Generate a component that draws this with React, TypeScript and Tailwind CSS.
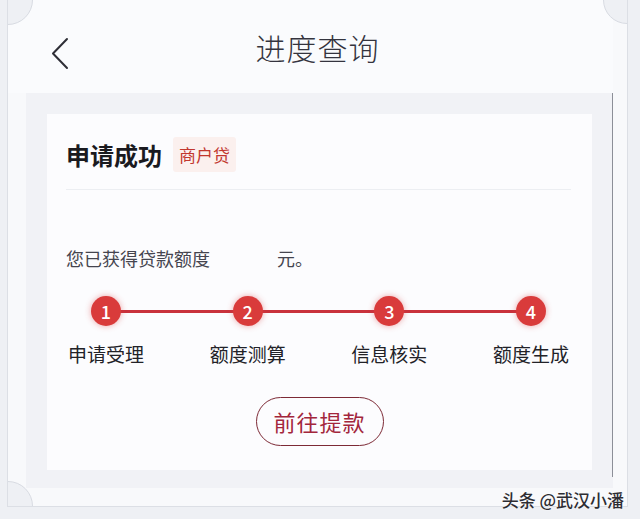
import React from "react";

const steps = ["申请受理", "额度测算", "信息核实", "额度生成"];

const font = { fontFamily: '"Noto Sans CJK SC", "Noto Sans", sans-serif' };

const Step = ({n, label}: {n: number; label: string}) => (
    <div className="relative z-10 flex w-[80px] flex-col items-center">
        <div className="flex size-[30px] items-center justify-center rounded-full bg-[#d93b3b] text-[18px] font-medium leading-none text-white shadow-[0_0_6px_rgba(217,59,59,0.45)]">
            {n}
        </div>
        <span className="mt-[16px] whitespace-nowrap text-[19px] leading-[24px] text-[#222228]">{label}</span>
    </div>
);

export default function App() {
    return (
        <div className="relative h-[519px] w-[640px] overflow-hidden bg-[#eef0f4]" style={font}>
            {/* phone frame */}
            <div className="relative ml-[7px] h-[507px] w-[621px] overflow-hidden border-x border-b border-[#dcdfe5] bg-[#f8f9fb]">
                {/* notched corners */}
                <div className="absolute -left-[25px] -top-[25px] z-20 size-[50px] rounded-full border border-[#d8dbe2] bg-[#eef0f4]" />
                <div className="absolute -right-[24px] -top-[24px] z-20 size-[48px] rounded-full border border-[#d8dbe2] bg-[#eef0f4]" />
                <div className="absolute -bottom-[25px] -left-[25px] z-20 size-[50px] rounded-full border border-[#d8dbe2] bg-[#eef0f4]" />
                {/* right edge of the screen */}
                <div className="absolute left-[604px] top-[20px] h-[457px] w-px bg-[#8c8f98]" />

                <div className="flex h-full w-[605px] flex-col">
                    {/* header */}
                    <div className="relative flex h-[93px] shrink-0 items-center justify-center bg-[#fafbfd]">
                        <svg className="absolute left-[43px] top-[37px]" width="20" height="34" viewBox="0 0 20 34" fill="none">
                            <path d="M16 2 L2 16.5 L16 31" stroke="#2e2e36" strokeWidth="2" strokeLinecap="round" strokeLinejoin="round" />
                        </svg>
                        <h1 className="ml-[14px] text-[30px] font-light leading-none tracking-[1px] text-[#34343e]">进度查询</h1>
                    </div>

                    {/* content */}
                    <div className="ml-[18px] h-[395px] bg-[#f1f2f6] px-[21px] pt-[21px]">
                        <div className="flex h-[356px] flex-col bg-[#fcfcfe] px-[19px] pt-[23px]">
                            <div className="flex items-center gap-[11px]">
                                <span className="text-[24px] font-bold leading-[35px] text-[#1a1a1f]">申请成功</span>
                                <span className="rounded-[3px] bg-[#fbf0ee] px-[6px] text-[17px] leading-[35px] text-[#c2372e]">商户贷</span>
                            </div>
                            <div className="mr-[2px] mt-[17px] h-px bg-[#eceef2]" />

                            <p className="mt-[56px] flex text-[18px] leading-[24px] text-[#45454f]">
                                <span>您已获得贷款额度</span>
                                <span className="ml-[67px]">元。</span>
                            </p>

                            <div className="relative mr-[2px] mt-[26px] flex justify-between">
                                <div className="absolute left-[40px] right-[40px] top-[14px] h-[3px] bg-[#c9323c]" />
                                {steps.map((s, i) => (
                                    <Step key={s} n={i + 1} label={s} />
                                ))}
                            </div>

                            <button className="mx-auto mt-[31px] flex h-[49px] w-[128px] items-center justify-center rounded-full border-[1.5px] border-[#7d2a36] text-[22px] tracking-[1px] text-[#a3263c]">
                                前往提款
                            </button>
                        </div>
                    </div>
                </div>
            </div>

            {/* watermark */}
            <div className="absolute bottom-[11px] right-[16px] text-[17px] font-medium leading-none text-[#2d2d33] [text-shadow:0_0_2px_#fff]">
                头条 @武汉小潘
            </div>
        </div>
    );
}
